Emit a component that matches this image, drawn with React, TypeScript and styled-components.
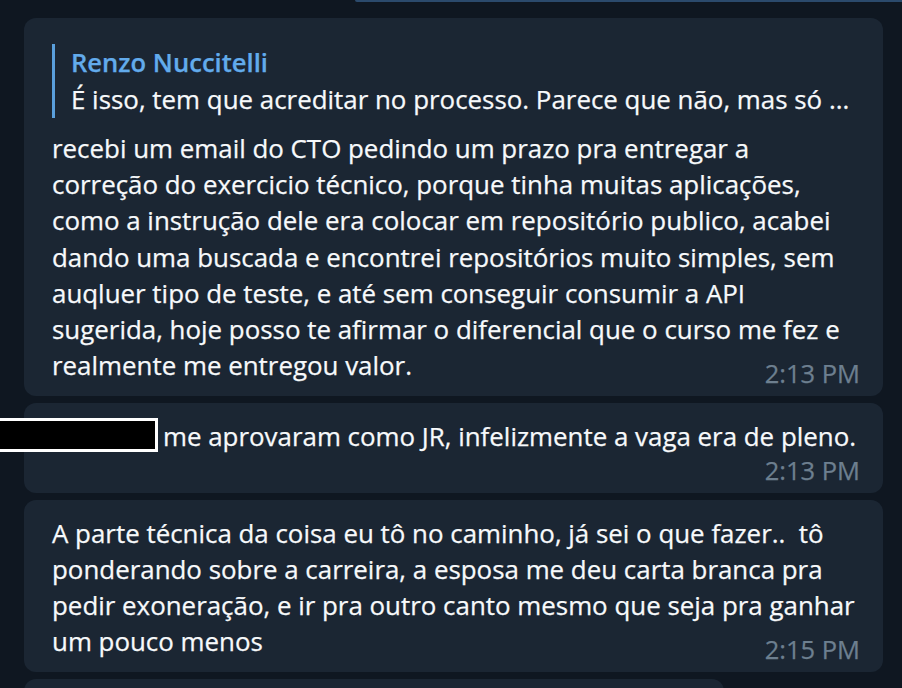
import React from "react";
import styled, { createGlobalStyle } from "styled-components";

const Global = createGlobalStyle`
  html, body {
    margin: 0;
    padding: 0;
    background: #0f1721;
    overflow: hidden;
  }
  body {
    font-family: "Open Sans", "Noto Sans", sans-serif;
    -webkit-font-smoothing: antialiased;
  }
`;

const Page = styled.div`
  width: 902px;
  height: 688px;
  overflow: hidden;
  background: #0f1721;
  display: flex;
  flex-direction: column;
  gap: 7px;
  padding: 0 19px 0 24px;
  box-sizing: border-box;
`;

const OutgoingTail = styled.div`
  height: 2px;
  margin-left: 331px;
  margin-right: -19px;
  background: #2b4a6c;
  border-bottom-left-radius: 6px;
  margin-bottom: 9px;
  flex-shrink: 0;
`;

const Bubble = styled.div`
  flex-shrink: 0;
  background: #1b2633;
  border-radius: 12px;
  padding: 15px 23px 10px 28px;
  color: #f7f9fb;
  font-size: 25.9px;
  line-height: 36.2px;
  box-sizing: border-box;
  -webkit-text-stroke: 0.25px currentColor;
`;

const Reply = styled.div`
  margin: 11px 0 12px;
  border-left: 3px solid #5a9fdc;
  padding-left: 16px;
  line-height: 37px;
`;

const ReplyName = styled.div`
  color: #62abec;
  font-weight: 600;
  font-size: 25.6px;
`;

const ReplyText = styled.div`
  white-space: nowrap;
`;

const Text = styled.div``;

const Line = styled.span`
  white-space: pre;
`;

const Meta = styled.div<{ $inline?: boolean }>`
  display: flex;
  justify-content: flex-end;
  margin-top: ${(p) => (p.$inline ? "-23px" : "2px")};
  line-height: 26px;
  color: #6d7f8f;
  font-size: 25.5px;
`;

const Redacted = styled.span`
  display: inline-block;
  vertical-align: top;
  width: 162px;
  height: 34px;
  margin-left: -56px;
  margin-right: 5px;
  background: #000;
  border: 3px solid #ffffff;
  box-sizing: border-box;
`;

const Partial = styled.div`
  flex-shrink: 0;
  width: 700px;
  height: 40px;
  background: #1b2633;
  border-radius: 12px 12px 0 0;
`;

function Lines({ lines }: { lines: string[] }) {
  return (
    <Text>
      {lines.map((l, i) => (
        <React.Fragment key={i}>
          <Line>{l}</Line>
          {i < lines.length - 1 && <br />}
        </React.Fragment>
      ))}
    </Text>
  );
}

const first = [
  "recebi um email do CTO pedindo um prazo pra entregar a",
  "correção do exercicio técnico, porque tinha muitas aplicações,",
  "como a instrução dele era colocar em repositório publico, acabei",
  "dando uma buscada e encontrei repositórios muito simples, sem",
  "auqluer tipo de teste, e até sem conseguir consumir a API",
  "sugerida, hoje posso te afirmar o diferencial que o curso me fez e",
  "realmente me entregou valor.",
];

const third = [
  "A parte técnica da coisa eu tô no caminho, já sei o que fazer..  tô",
  "ponderando sobre a carreira, a esposa me deu carta branca pra",
  "pedir exoneração, e ir pra outro canto mesmo que seja pra ganhar",
  "um pouco menos",
];

export default function App() {
  return (
    <>
      <Global />
      <Page>
        <OutgoingTail />
        <Bubble>
          <Reply>
            <ReplyName>Renzo Nuccitelli</ReplyName>
            <ReplyText>É isso, tem que acreditar no processo. Parece que não, mas só ...</ReplyText>
          </Reply>
          <Lines lines={first} />
          <Meta $inline>2:13 PM</Meta>
        </Bubble>
        <Bubble>
          <Text>
            <Redacted />
            <Line>me aprovaram como JR, infelizmente a vaga era de pleno.</Line>
          </Text>
          <Meta>2:13 PM</Meta>
        </Bubble>
        <Bubble>
          <Lines lines={third} />
          <Meta $inline>2:15 PM</Meta>
        </Bubble>
        <Partial />
      </Page>
    </>
  );
}
